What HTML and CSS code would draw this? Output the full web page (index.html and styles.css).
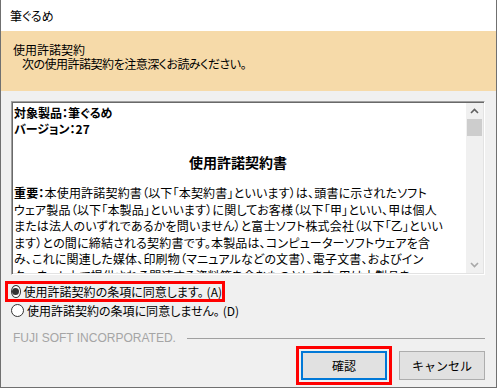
FILE: index.html
```html
<!DOCTYPE html>
<html lang="ja">
<head>
  <meta charset="UTF-8" />
  <title>筆ぐるめ</title>
  <link rel="stylesheet" href="styles.css">
</head>
<body>

<div class="window">
  <div class="titlebar">筆ぐるめ</div>

  <div class="banner">
    <div class="banner-title">使用許諾契約</div>
    <div class="banner-sub">次の使用許諾契約を注意深くお読みください。</div>
  </div>

  <div class="content">
    <!-- License text box -->
    <div class="license">
      <div class="license-text">
        <div class="bold">対象製品：筆ぐるめ</div>
        <div class="bold">バージョン：27</div>
        <div class="blank"></div>
        <div class="doc-title">使用許諾契約書</div>
        <div class="body-line"><b>重要：</b>本使用許諾契約書（以下「本契約書」といいます）は、頭書に示されたソフト</div>
        <div class="body-line">ウェア製品（以下「本製品」といいます）に関してお客様（以下「甲」といい、甲は個人</div>
        <div class="body-line">または法人のいずれであるかを問いません）と富士ソフト株式会社（以下「乙」といい</div>
        <div class="body-line">ます）との間に締結される契約書です。本製品は、コンピューターソフトウェアを含</div>
        <div class="body-line">み、これに関連した媒体、印刷物（マニュアルなどの文書）、電子文書、およびイン</div>
        <div class="body-line">ターネット上で提供される関連する資料等を含むものとします。甲は本製品を</div>
      </div>
      <div class="scrollbar">
        <div class="sb-btn">
          <svg width="9" height="6" viewBox="0 0 9 6"><polyline points="1,5 4.5,1.5 8,5" fill="none" stroke="#606060" stroke-width="1.6"/></svg>
        </div>
        <div class="sb-thumb"></div>
        <div class="sb-track"></div>
        <div class="sb-btn">
          <svg width="9" height="6" viewBox="0 0 9 6"><polyline points="1,1 4.5,4.5 8,1" fill="none" stroke="#a8a8a8" stroke-width="1.6"/></svg>
        </div>
      </div>
    </div>

    <!-- Agree / disagree -->
    <div class="choices">
      <label class="choice highlight"><span class="radio checked"></span>使用許諾契約の条項に同意します。<span class="key">(A)</span></label>
      <label class="choice"><span class="radio"></span>使用許諾契約の条項に同意しません。<span class="key">(D)</span></label>
    </div>

    <div class="company">
      <span>FUJI SOFT INCORPORATED.</span>
      <span class="rule"></span>
    </div>

    <div class="buttons">
      <span class="highlight-btn"><button class="btn default">確認</button></span>
      <button class="btn">キャンセル</button>
    </div>
  </div>
</div>

</body>
</html>
```

FILE: styles.css
```css
body {
  margin: 0;
  font-family: "Noto Sans CJK JP", "Noto Sans", sans-serif;
  font-feature-settings: "palt";
  font-size: 12px;
  color: #000;
}

.window {
  width: 497px;
  height: 388px;
  box-sizing: border-box;
  border: 1px solid #707070;
  border-top: none;
  background: #f0f0f0;
}

.titlebar {
  height: 31px;
  line-height: 31px;
  padding-left: 9px;
  background: #fff;
}

.banner {
  height: 60px;
  box-sizing: border-box;
  padding: 12px 0 0 12px;
  background: #f6daa9;
  line-height: 14px;
}

.banner-sub {
  padding-left: 9px;
  letter-spacing: -0.5px;
}

.content {
  padding: 10px 11px 0 10px;
}

.license {
  display: flex;
  height: 174px;
  box-sizing: border-box;
  padding: 1px;
  border: 1px solid;
  border-color: #a0a0a0 #fff #fff #a0a0a0;
  box-shadow: inset 1px 1px 0 #696969, inset -1px -1px 0 #e3e3e3;
  background: #fff;
}

.license-text {
  flex: 1;
  overflow: hidden;
  padding: 2px 0 0 1px;
  line-height: 16px;
  white-space: nowrap;
}

.license-text .bold,
.license-text b {
  font-weight: bold;
}

.body-line {
  line-height: 16.5px;
  letter-spacing: 0.18px;
}

.blank {
  height: 16px;
}

.doc-title {
  text-align: center;
  font-size: 14px;
  font-weight: bold;
  line-height: 18px;
  margin-bottom: 14px;
  padding-right: 4px;
}

.scrollbar {
  width: 17px;
  display: flex;
  flex-direction: column;
  background: #f0f0f0;
}

.sb-btn {
  height: 16px;
  display: flex;
  align-items: center;
  justify-content: center;
}

.sb-thumb {
  height: 17px;
  margin: 0 1px;
  background: #cdcdcd;
}

.sb-track {
  flex: 1;
}

.choices {
  margin-top: 6px;
}

.choice {
  display: flex;
  align-items: center;
  height: 16px;
  white-space: nowrap;
}

.choice .key {
  margin-left: 3px;
}

.choice.highlight {
  width: 220px;
  height: 21px;
  box-sizing: border-box;
  margin-left: -6px;
  padding-left: 3px;
  border: 3px solid #ff0000;
}

.radio {
  width: 13px;
  height: 13px;
  box-sizing: border-box;
  margin-right: 3px;
  border: 1px solid #333;
  border-radius: 50%;
  background: #fff;
  display: flex;
  align-items: center;
  justify-content: center;
}

.radio.checked::after {
  content: "";
  width: 7px;
  height: 7px;
  border-radius: 50%;
  background: #333;
}

.company {
  display: flex;
  align-items: center;
  margin-top: 13px;
  height: 14px;
  font-family: "Liberation Sans", Arial, sans-serif;
  font-size: 12px;
  color: #a5a5a5;
  padding-left: 2px;
}

.company .rule {
  flex: 1;
  height: 1px;
  margin-left: 11px;
  background: #a0a0a0;
}

.buttons {
  display: flex;
  justify-content: flex-end;
  align-items: flex-start;
  gap: 7px;
  margin-top: 1px;
}

.highlight-btn {
  display: block;
  padding: 2px;
  border: 3px solid #ff0000;
}

.btn {
  display: block;
  width: 86px;
  height: 29px;
  box-sizing: border-box;
  padding: 0;
  font-family: inherit;
  font-size: 12px;
  color: #000;
  background: #e1e1e1;
  border: 1px solid #adadad;
}

.btn.default {
  border: 2px solid #0078d7;
}

.buttons > .btn {
  margin-top: 5px;
}
```
